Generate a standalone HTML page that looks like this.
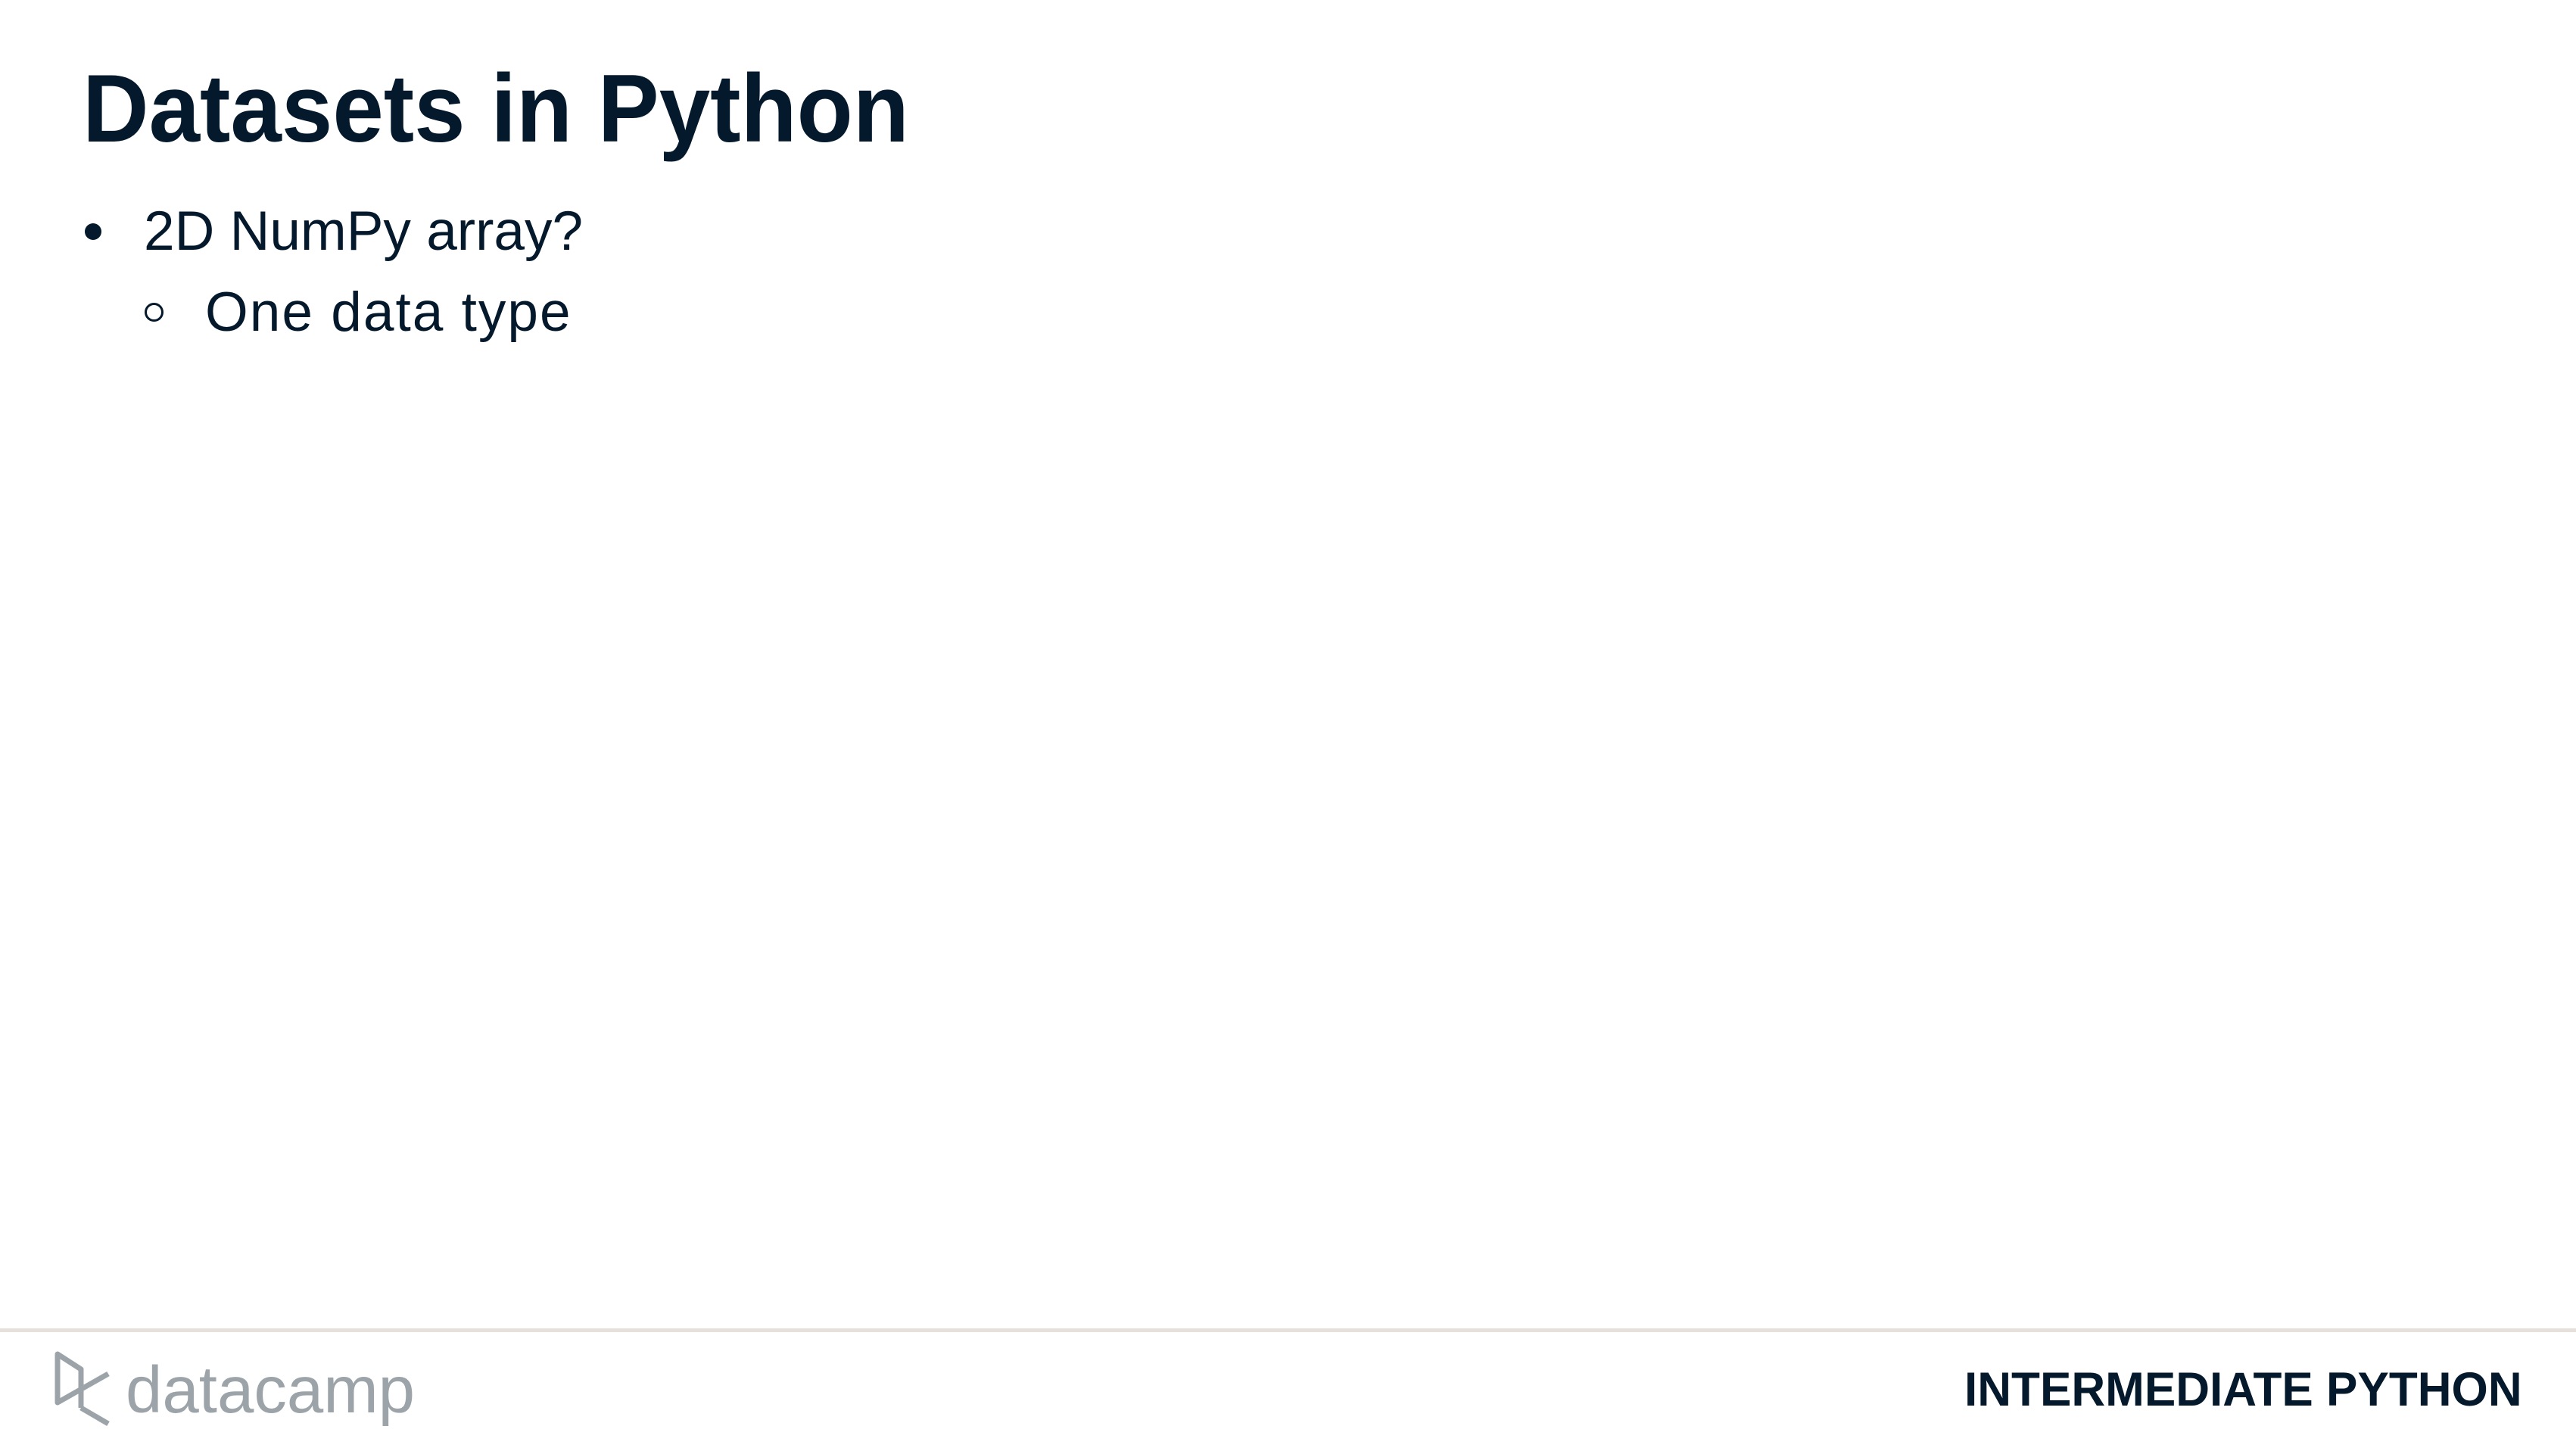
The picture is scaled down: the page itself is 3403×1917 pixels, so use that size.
<!DOCTYPE html>
<html><head><meta charset="utf-8"><style>
html,body{margin:0;padding:0;background:#fff;}
body{width:3403px;height:1917px;position:relative;overflow:hidden;font-family:"Liberation Sans",sans-serif;color:#05192d;}
.t{position:absolute;white-space:nowrap;line-height:1;transform-origin:0 0;}
</style></head><body>
<div class="t" style="left:109px;top:80px;font-size:127px;font-weight:bold;transform:scaleX(0.955);">Datasets in Python</div>
<div style="position:absolute;left:112px;top:295px;width:22px;height:22px;border-radius:50%;background:#05192d;"></div>
<div class="t" style="left:190px;top:269px;font-size:73px;">2D NumPy array?</div>
<div style="position:absolute;left:191px;top:400px;width:19px;height:19px;border-radius:50%;border:3.5px solid #05192d;"></div>
<div class="t" style="left:271px;top:376px;font-size:73px;letter-spacing:2px;">One data type</div>
<div style="position:absolute;left:0;top:1755px;width:3403px;height:5px;background:#e5e1da;"></div>
<svg style="position:absolute;left:0;top:0" width="200" height="1917" viewBox="0 0 200 1917">
<g fill="none" stroke="#9ca4aa" stroke-width="7" stroke-linejoin="round" stroke-linecap="butt">
<path d="M107 1860 V1809 L76 1789 V1853 L143 1815"/>
<path d="M107 1860 L143 1881"/>
</g></svg>
<div class="t" style="left:166px;top:1793px;font-size:87px;color:#9ca4aa;transform:scaleX(1.0);">datacamp</div>
<div class="t" style="left:2595px;top:1805px;font-size:63px;font-weight:bold;transform:scaleX(0.985);">INTERMEDIATE PYTHON</div>
</body></html>
